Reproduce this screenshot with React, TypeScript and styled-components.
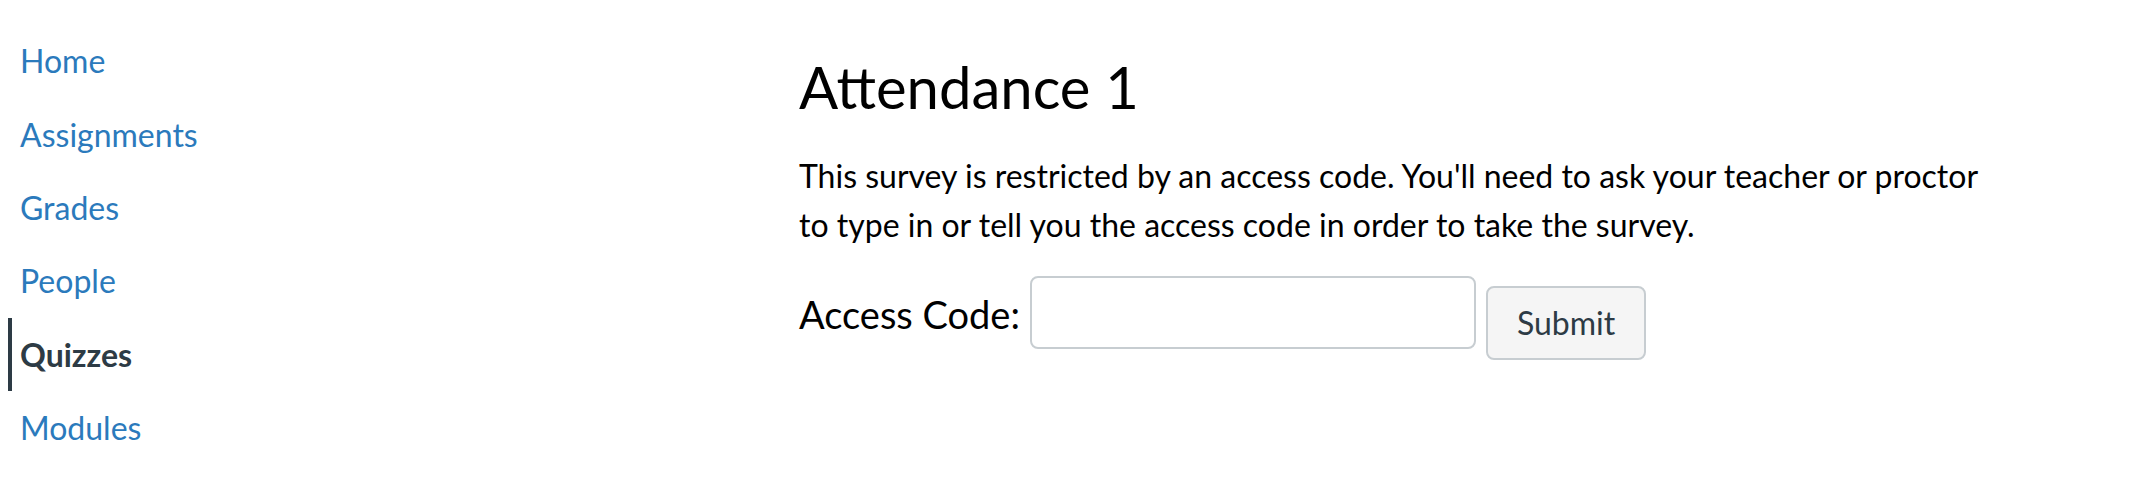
import React from "react";
import styled, { createGlobalStyle } from "styled-components";

const GlobalStyle = createGlobalStyle`
  html, body {
    margin: 0;
    padding: 0;
    background: #ffffff;
  }
  body {
    font-family: Lato, "Noto Sans", "Liberation Sans", sans-serif;
  }
`;

const Page = styled.div`
  display: grid;
  grid-template-columns: 799px 1fr;
  width: 2142px;
  height: 504px;
  background: #fff;
`;

const Sidebar = styled.nav`
  display: flex;
  flex-direction: column;
  padding: 24.3px 0 0 8px;
`;

const NavLink = styled.a<{ $active?: boolean }>`
  display: block;
  height: 73.33px;
  line-height: 73.33px;
  padding-left: 8px;
  border-left: 4px solid ${(p) => (p.$active ? "#2d3b45" : "transparent")};
  font-size: 32px;
  font-weight: ${(p) => (p.$active ? 700 : 400)};
  color: ${(p) => (p.$active ? "#2d3b45" : "#2b7abc")};
  text-decoration: none;
  white-space: nowrap;
`;

const Main = styled.main`
  display: flex;
  flex-direction: column;
  padding-top: 51px;
`;

const Title = styled.h1`
  margin: 0;
  font-size: 58px;
  font-weight: 400;
  line-height: 72px;
  color: #000;
`;

const Description = styled.p`
  margin: 29px 0 0;
  max-width: 1195px;
  font-size: 32px;
  line-height: 48.5px;
  color: #000;
`;

const AccessRow = styled.form`
  display: flex;
  align-items: flex-start;
  margin-top: 27px;
`;

const Label = styled.label`
  margin-top: 18px;
  font-size: 38px;
  line-height: 41px;
  color: #000;
  white-space: nowrap;
`;

const CodeInput = styled.input`
  box-sizing: border-box;
  width: 446px;
  height: 73px;
  margin-left: 10px;
  border: 2px solid #c7cdd1;
  border-radius: 8px;
  background: #fff;
  outline: none;
  font-family: inherit;
  font-size: 32px;
  padding: 0 12px;
`;

const SubmitButton = styled.button`
  box-sizing: border-box;
  height: 74px;
  margin: 10px 0 0 10px;
  padding: 0 29px;
  border: 2px solid #c7cdd1;
  border-radius: 8px;
  background: #f5f5f5;
  color: #2d3b45;
  font-family: inherit;
  font-size: 32px;
  line-height: 1;
  cursor: pointer;
`;

const navItems = ["Home", "Assignments", "Grades", "People", "Quizzes", "Modules"];

export default function App() {
  return (
    <>
      <GlobalStyle />
      <Page>
        <Sidebar>
          {navItems.map((item) => (
            <NavLink key={item} href="#" $active={item === "Quizzes"}>
              {item}
            </NavLink>
          ))}
        </Sidebar>
        <Main>
          <Title>Attendance 1</Title>
          <Description>
            This survey is restricted by an access code. You'll need to ask your teacher or proctor
            to type in or tell you the access code in order to take the survey.
          </Description>
          <AccessRow onSubmit={(e) => e.preventDefault()}>
            <Label htmlFor="access-code">Access Code:</Label>
            <CodeInput id="access-code" type="text" />
            <SubmitButton type="submit">Submit</SubmitButton>
          </AccessRow>
        </Main>
      </Page>
    </>
  );
}
